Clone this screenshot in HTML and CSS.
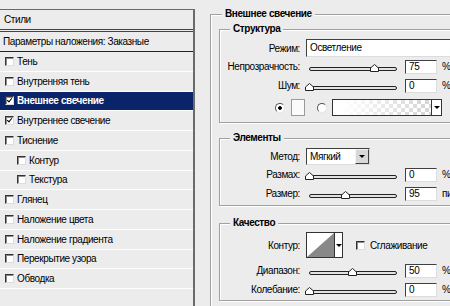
FILE: index.html
```html
<!DOCTYPE html>
<html lang="ru">
<head>
  <meta charset="UTF-8" />
  <title>Стиль слоя - Внешнее свечение</title>
  <link rel="stylesheet" href="styles.css">
</head>
<body>
  <div class="dialog">
    <div class="styles-list">
      <div class="list-head">Стили</div>
      <div class="list-blend">Параметры наложения: Заказные</div>
      <div class="style-item"><span class="cb"></span>Тень</div>
      <div class="style-item"><span class="cb"></span>Внутренняя тень</div>
      <div class="style-item selected"><span class="cb checked"></span>Внешнее свечение</div>
      <div class="style-item"><span class="cb checked"></span>Внутреннее свечение</div>
      <div class="style-item"><span class="cb"></span>Тиснение</div>
      <div class="style-item sub"><span class="cb"></span>Контур</div>
      <div class="style-item sub"><span class="cb"></span>Текстура</div>
      <div class="style-item"><span class="cb"></span>Глянец</div>
      <div class="style-item"><span class="cb"></span>Наложение цвета</div>
      <div class="style-item"><span class="cb"></span>Наложение градиента</div>
      <div class="style-item"><span class="cb"></span>Перекрытие узора</div>
      <div class="style-item"><span class="cb"></span>Обводка</div>
    </div>

    <div class="settings">
      <fieldset class="box outer">
        <legend>Внешнее свечение</legend>

        <fieldset class="box group group-structure">
          <legend>Структура</legend>
          <div class="row row-select">
            <span class="label">Режим:</span>
            <div class="select select-wide">Осветление</div>
          </div>
          <div class="row">
            <span class="label">Непрозрачность:</span>
            <div class="slider">
              <span class="thumb" style="left: 75%"><svg width="9" height="8" viewBox="0 0 9 8"><path d="M0.5 7.5V4L4.5 0.5L8.5 4V7.5Z" fill="#fff" stroke="#222"/></svg></span>
            </div>
            <div class="field">75</div>
            <span class="unit">%</span>
          </div>
          <div class="row">
            <span class="label">Шум:</span>
            <div class="slider">
              <span class="thumb" style="left: 0%"><svg width="9" height="8" viewBox="0 0 9 8"><path d="M0.5 7.5V4L4.5 0.5L8.5 4V7.5Z" fill="#fff" stroke="#222"/></svg></span>
            </div>
            <div class="field">0</div>
            <span class="unit">%</span>
          </div>
          <div class="row row-color">
            <span class="radio checked"></span>
            <span class="swatch"></span>
            <span class="radio radio-gradient"></span>
            <div class="gradient">
              <span class="gradient-fill"></span>
              <span class="drop"><span class="arrow"></span></span>
            </div>
          </div>
        </fieldset>

        <fieldset class="box group group-elements">
          <legend>Элементы</legend>
          <div class="row row-method">
            <span class="label">Метод:</span>
            <div class="select select-small">
              <span class="select-text">Мягкий</span>
              <span class="select-button"><span class="arrow"></span></span>
            </div>
          </div>
          <div class="row">
            <span class="label">Размах:</span>
            <div class="slider">
              <span class="thumb" style="left: 0%"><svg width="9" height="8" viewBox="0 0 9 8"><path d="M0.5 7.5V4L4.5 0.5L8.5 4V7.5Z" fill="#fff" stroke="#222"/></svg></span>
            </div>
            <div class="field">0</div>
            <span class="unit">%</span>
          </div>
          <div class="row">
            <span class="label">Размер:</span>
            <div class="slider">
              <span class="thumb" style="left: 42%"><svg width="9" height="8" viewBox="0 0 9 8"><path d="M0.5 7.5V4L4.5 0.5L8.5 4V7.5Z" fill="#fff" stroke="#222"/></svg></span>
            </div>
            <div class="field">95</div>
            <span class="unit">пикс.</span>
          </div>
        </fieldset>

        <fieldset class="box group group-quality">
          <legend>Качество</legend>
          <div class="row row-contour">
            <span class="label">Контур:</span>
            <div class="contour">
              <svg class="contour-curve" width="27" height="24" viewBox="0 0 27 24"><path d="M0 24L27 0V24Z" fill="#888"/></svg>
              <span class="contour-drop"><span class="arrow"></span></span>
            </div>
            <span class="cb smooth-cb"></span>
            <span class="smooth-text">Сглаживание</span>
          </div>
          <div class="row row-range">
            <span class="label">Диапазон:</span>
            <div class="slider">
              <span class="thumb" style="left: 50%"><svg width="9" height="8" viewBox="0 0 9 8"><path d="M0.5 7.5V4L4.5 0.5L8.5 4V7.5Z" fill="#fff" stroke="#222"/></svg></span>
            </div>
            <div class="field">50</div>
            <span class="unit">%</span>
          </div>
          <div class="row">
            <span class="label">Колебание:</span>
            <div class="slider">
              <span class="thumb" style="left: 0%"><svg width="9" height="8" viewBox="0 0 9 8"><path d="M0.5 7.5V4L4.5 0.5L8.5 4V7.5Z" fill="#fff" stroke="#222"/></svg></span>
            </div>
            <div class="field">0</div>
            <span class="unit">%</span>
          </div>
        </fieldset>
      </fieldset>
    </div>
  </div>
</body>
</html>
```

FILE: styles.css
```css
:root {
  --bg: #ececec;
  --text: #000;
  --line: #6a6a6a;
  --etch: #a0a0a0;
  --highlight: #0a246a;
}

html, body {
  margin: 0;
  overflow: hidden;
}

body {
  font-family: 'Liberation Sans', Arial, sans-serif;
  font-size: 10px;
  letter-spacing: -0.4px;
  color: var(--text);
  background: var(--bg);
}

.dialog {
  display: flex;
  width: 450px;
  height: 306px;
  overflow: hidden;
}

/* left: list of layer styles */

.styles-list {
  flex: none;
  width: 193px;
  margin-top: 9px;
  border-top: 1px solid var(--line);
  border-right: 2px solid var(--line);
}

.list-head {
  height: 19px;
  line-height: 19px;
  padding-left: 4px;
  border-bottom: 3px double #444;
}

.list-blend {
  height: 19px;
  line-height: 19px;
  padding-left: 3px;
  border-bottom: 1px solid #222;
}

.style-item {
  display: flex;
  align-items: center;
  box-sizing: border-box;
  height: 19.75px;
  padding-left: 5px;
  border-bottom: 1px solid #fff;
  white-space: nowrap;
}

.style-item.sub {
  padding-left: 17px;
}

.style-item.selected {
  background: var(--highlight);
  color: #fff;
  font-weight: bold;
}

.cb {
  flex: none;
  display: flex;
  align-items: center;
  justify-content: center;
  box-sizing: border-box;
  width: 9px;
  height: 9px;
  margin-right: 3px;
  background: #fff;
  border: 1px solid;
  border-color: #333 #dcdcdc #dcdcdc #333;
  box-shadow: inset 1px 1px 0 #8a8a8a;
}

.cb.checked::after {
  content: '';
  width: 2px;
  height: 4px;
  margin-top: -2px;
  border: solid #000;
  border-width: 0 1.5px 1.5px 0;
  transform: rotate(40deg);
}

/* right: settings */

.settings {
  flex: none;
  width: 270px;
}

.box {
  margin: 0;
  min-width: 0;
  border: 1px solid var(--etch);
  box-shadow: 1px 1px 0 #fff, inset 1px 1px 0 #fff;
}

.box > legend {
  padding: 0 3px;
  font-weight: bold;
  line-height: 12px;
  background: var(--bg);
}

.outer {
  margin: 8px 0 0 15px;
  padding: 3px 0 0 8px;
  height: 320px;
}

.outer > legend {
  margin-left: 3px;
}

.group {
  padding: 0;
}

.group > legend {
  margin-left: 10px;
}

.group-structure {
  padding-bottom: 6px;
}

.group-elements {
  margin-top: 9px;
  padding-bottom: 2px;
}

.group-quality {
  margin-top: 11px;
  padding-bottom: 1px;
}

.row {
  display: flex;
  align-items: center;
  height: 19px;
  white-space: nowrap;
}

.row-select {
  height: 18px;
  margin-top: 4px;
}

.row-color {
  height: 17px;
  margin-top: 4px;
}

.row-method {
  height: 17px;
  margin-top: 4px;
}

.row-contour {
  height: 26px;
  margin-top: 3px;
}

.row-range {
  margin-top: 3px;
}

.label {
  flex: none;
  width: 80px;
  text-align: right;
}

.select {
  box-sizing: border-box;
  margin-left: 6px;
  background: #fff;
  border: 1px solid;
  border-color: #404040 #dcdcdc #dcdcdc #404040;
}

.select-wide {
  width: 160px;
  height: 18px;
  line-height: 16px;
  padding-left: 3px;
}

.select-small {
  display: flex;
  width: 64px;
  height: 17px;
}

.select-text {
  flex: 1;
  padding-left: 3px;
  line-height: 15px;
}

.select-button {
  display: flex;
  align-items: center;
  justify-content: center;
  width: 14px;
  background: #d8d8d8;
  border: 1px solid;
  border-color: #f4f4f4 #404040 #404040 #f4f4f4;
  box-sizing: border-box;
}

.arrow {
  width: 0;
  height: 0;
  border-left: 3px solid transparent;
  border-right: 3px solid transparent;
  border-top: 3px solid #000;
}

.slider {
  position: relative;
  flex: none;
  box-sizing: border-box;
  width: 88px;
  height: 4px;
  margin: 4px 0 0 9px;
  border: 1px solid #222;
  border-radius: 2px;
  background: #e2e2e2;
}

.thumb {
  position: absolute;
  bottom: -2px;
  width: 9px;
  height: 8px;
  margin-left: -5px;
}

.thumb svg {
  display: block;
}

.field {
  flex: none;
  box-sizing: border-box;
  width: 32px;
  height: 14px;
  margin-left: 8px;
  padding-left: 3px;
  line-height: 12px;
  background: #fff;
  border: 1px solid;
  border-color: #404040 #dcdcdc #dcdcdc #404040;
}

.unit {
  margin-left: 5px;
}

.radio {
  flex: none;
  box-sizing: border-box;
  width: 10px;
  height: 10px;
  margin-left: 55px;
  border-radius: 50%;
  border: 1px solid;
  border-color: #555 #e4e4e4 #e4e4e4 #555;
  background: #fff;
}

.radio.checked {
  background: radial-gradient(circle, #000 0 1.5px, #fff 2.2px);
}

.radio-gradient {
  margin-left: 12px;
}

.swatch {
  flex: none;
  box-sizing: border-box;
  width: 14px;
  height: 17px;
  margin-left: 6px;
  background: #fbfbfb;
  border: 1px solid #9a9a9a;
}

.gradient {
  flex: none;
  display: flex;
  box-sizing: border-box;
  width: 110px;
  height: 17px;
  margin-left: 5px;
  border: 1px solid #333;
}

.gradient-fill {
  flex: 1;
  background:
    linear-gradient(to right, #fff 8%, rgba(255, 255, 255, 0) 95%),
    repeating-conic-gradient(#d6d6d6 0 25%, #fff 0 50%) 0 0 / 8px 8px;
}

.drop {
  display: flex;
  align-items: center;
  justify-content: center;
  width: 9px;
  background: #fff;
  border-left: 1px solid #333;
}

.contour {
  flex: none;
  display: flex;
  box-sizing: border-box;
  width: 37px;
  height: 26px;
  margin-left: 6px;
  background: #fff;
  border: 1px solid #333;
}

.contour-curve {
  display: block;
}

.contour-drop {
  display: flex;
  align-items: center;
  justify-content: center;
  flex: 1;
  border-left: 1px solid #333;
}

.smooth-cb {
  margin-left: 13px;
  margin-right: 5px;
}
```
